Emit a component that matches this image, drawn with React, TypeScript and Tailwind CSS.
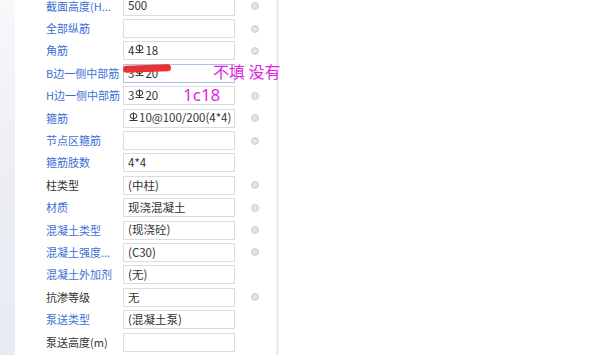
import React from "react";

type Row = {
  label: string;
  value: React.ReactNode;
  blue: boolean;
  dot: boolean;
  focused?: boolean;
};

// HRB400 rebar mark drawn small and raised like the reference
function Bar(): React.ReactElement {
  return (
    <svg width="9" height="10" viewBox="0 0 9 10" className="mx-[1px] -mt-[3px] inline-block align-middle">
      <ellipse cx="4.5" cy="4" rx="3.4" ry="2.6" fill="none" stroke="#333" strokeWidth="1" />
      <line x1="4.5" y1="0.5" x2="4.5" y2="8" stroke="#333" strokeWidth="1" />
      <line x1="0.5" y1="8.5" x2="8.5" y2="8.5" stroke="#333" strokeWidth="1" />
    </svg>
  );
}

const rows: Row[] = [
  { label: "截面高度(H...", value: "500", blue: true, dot: true },
  { label: "全部纵筋", value: "", blue: true, dot: true },
  { label: "角筋", value: <>4<Bar />18</>, blue: true, dot: true },
  { label: "B边一侧中部筋", value: <>3<Bar />20</>, blue: true, dot: true, focused: true },
  { label: "H边一侧中部筋", value: <>3<Bar />20</>, blue: true, dot: true },
  { label: "箍筋", value: <><Bar />10@100/200(4*4)</>, blue: true, dot: true },
  { label: "节点区箍筋", value: "", blue: true, dot: true },
  { label: "箍筋肢数", value: "4*4", blue: true, dot: false },
  { label: "柱类型", value: "(中柱)", blue: false, dot: true },
  { label: "材质", value: "现浇混凝土", blue: true, dot: true },
  { label: "混凝土类型", value: "(现浇砼)", blue: true, dot: true },
  { label: "混凝土强度...", value: "(C30)", blue: true, dot: true },
  { label: "混凝土外加剂", value: "(无)", blue: true, dot: false },
  { label: "抗渗等级", value: "无", blue: false, dot: true },
  { label: "泵送类型", value: "(混凝土泵)", blue: true, dot: false },
  { label: "泵送高度(m)", value: "", blue: false, dot: false },
];

export default function App(): React.ReactElement {
  return (
    <div
      className="relative flex h-[355px] w-[597px] overflow-hidden bg-white text-[11.5px]"
      style={{ fontFamily: '"Noto Sans CJK SC", "Noto Sans", sans-serif' }}
    >
      {/* left strip */}
      <div className="w-[15px] shrink-0 bg-gradient-to-b from-[#f7f8fa] via-[#eceef4] to-[#e8ebf2]" />

      {/* property panel */}
      <div className="w-[261px] shrink-0 bg-white">
        <div className="-mt-[5px] flex flex-col">
          {rows.map((r, i) => (
            <div key={i} className="flex h-[22.4px] items-center">
              <div
                className={`w-[108px] shrink-0 pl-[31px] text-[11px] whitespace-nowrap leading-none ${
                  r.blue ? "text-[#3c6fd6]" : "text-[#333333]"
                }`}
              >
                {r.label}
              </div>
              <div
                className={`flex h-[19px] w-[112px] shrink-0 items-center border pl-[4px] whitespace-nowrap text-[#333333] leading-none ${
                  r.focused ? "border-[#a9c2ea]" : "border-[#dcdcdc]"
                }`}
              >
                {r.value}
              </div>
              <div className="flex w-[38px] justify-center pl-[2px]">
                {r.dot && (
                  <div className="h-[8px] w-[8px] rounded-full border border-[#d0d0d0] bg-[radial-gradient(circle,#ececec,#d3d3d3)]" />
                )}
              </div>
            </div>
          ))}
        </div>
      </div>

      {/* divider */}
      <div className="w-[3px] shrink-0 bg-[#ededed]" />
      <div className="flex-1 bg-white" />

      {/* annotations drawn over the screenshot */}
      <div className="absolute left-[123px] top-[65px] h-[7px] w-[48px] -rotate-[2deg] rounded-full bg-[#ee2f2f]" />
      <div className="absolute left-[213px] top-[63px] whitespace-nowrap text-[16px] leading-none text-[#e41fe4]">
        不填 没有
      </div>
      <div
        className="absolute left-[183px] top-[86px] text-[17px] leading-none text-[#e41fe4]"
        style={{ fontFamily: '"Noto Sans", sans-serif' }}
      >
        1c18
      </div>
    </div>
  );
}
